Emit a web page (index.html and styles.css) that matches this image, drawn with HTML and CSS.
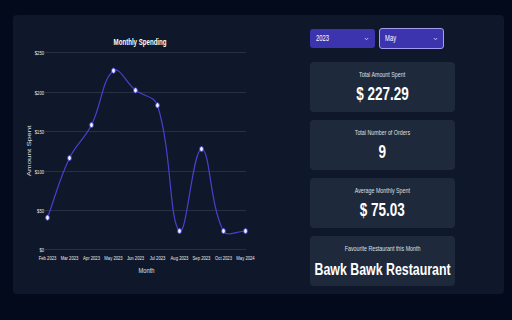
FILE: index.html
```html
<!DOCTYPE html>
<html lang="en">
<head>
<meta charset="utf-8">
<title>Monthly Spending</title>
<link rel="stylesheet" href="styles.css">
</head>
<body>
<main class="panel">
  <svg class="chart" width="287" height="279" viewBox="13 15 287 279" xmlns="http://www.w3.org/2000/svg">
    <text class="chart-title" x="140" y="45.5" text-anchor="middle">Monthly Spending</text>
    <g class="grid">
      <line x1="45" y1="52.5" x2="246" y2="52.5"/>
      <line x1="45" y1="92.5" x2="246" y2="92.5"/>
      <line x1="45" y1="131.5" x2="246" y2="131.5"/>
      <line x1="45" y1="171.5" x2="246" y2="171.5"/>
      <line x1="45" y1="210.5" x2="246" y2="210.5"/>
      <line x1="45" y1="249.5" x2="246" y2="249.5"/>
    </g>
    <g class="ytick" text-anchor="end">
      <text x="44" y="54.6">$250</text>
      <text x="44" y="94.6">$200</text>
      <text x="44" y="133.6">$150</text>
      <text x="44" y="173.6">$100</text>
      <text x="44" y="212.6">$50</text>
      <text x="44" y="251.6">$0</text>
    </g>
    <g class="xtick" text-anchor="middle">
      <text x="47.5" y="260">Feb 2023</text>
      <text x="69.5" y="260">Mar 2023</text>
      <text x="91.5" y="260">Apr 2023</text>
      <text x="113.5" y="260">May 2023</text>
      <text x="135.5" y="260">Jun 2023</text>
      <text x="157.5" y="260">Jul 2023</text>
      <text x="179.5" y="260">Aug 2023</text>
      <text x="201.5" y="260">Sep 2023</text>
      <text x="223.5" y="260">Oct 2023</text>
      <text x="245.5" y="260">May 2024</text>
    </g>
    <text class="axis-title" x="146.5" y="273.5" text-anchor="middle">Month</text>
    <g transform="translate(32 151) rotate(-90)">
      <text class="axis-title axis-title-v" x="0" y="0" text-anchor="middle">Amount Spent</text>
    </g>
    <path class="line" d="M47.5,217.7 C56.3,193.8 58.7,180.8 69.5,158 C76.3,143.7 84.4,139.1 91.5,125 C102,104.2 101.8,79.9 113.5,70.7 C119.4,66.1 126.3,83 135.5,90.3 C143.9,96.9 154.5,95.6 157.5,105.3 C172.1,151.9 168.9,220.5 179.5,231 C186.5,238 192.7,149 201.5,149 C210.3,149 209.5,204.9 223.5,231 C227.1,237.7 236.7,231 245.5,231"/>
    <g class="pts">
      <ellipse cx="47.5" cy="217.7" rx="1.9" ry="2.6"/>
      <ellipse cx="69.5" cy="158" rx="1.9" ry="2.6"/>
      <ellipse cx="91.5" cy="125" rx="1.9" ry="2.6"/>
      <ellipse cx="113.5" cy="70.7" rx="1.9" ry="2.6"/>
      <ellipse cx="135.5" cy="90.3" rx="1.9" ry="2.6"/>
      <ellipse cx="157.5" cy="105.3" rx="1.9" ry="2.6"/>
      <ellipse cx="179.5" cy="231" rx="1.9" ry="2.6"/>
      <ellipse cx="201.5" cy="149" rx="1.9" ry="2.6"/>
      <ellipse cx="223.5" cy="231" rx="1.9" ry="2.6"/>
      <ellipse cx="245.5" cy="231" rx="1.9" ry="2.6"/>
    </g>
  </svg>
  <section class="side">
    <div class="filters">
      <div class="select">
        <span class="select-text">2023</span>
        <svg class="chev" width="5" height="4" viewBox="0 0 5 4"><path d="M0.8 1 L2.5 2.8 L4.2 1"/></svg>
      </div>
      <div class="select select-active">
        <span class="select-text">May</span>
        <svg class="chev" width="5" height="4" viewBox="0 0 5 4"><path d="M0.8 1 L2.5 2.8 L4.2 1"/></svg>
      </div>
    </div>
    <div class="cards">
      <div class="card">
        <div class="label">Total Amount Spent</div>
        <div class="value">$ 227.29</div>
      </div>
      <div class="card">
        <div class="label">Total Number of Orders</div>
        <div class="value">9</div>
      </div>
      <div class="card">
        <div class="label">Average Monthly Spent</div>
        <div class="value">$ 75.03</div>
      </div>
      <div class="card">
        <div class="label">Favourite Restaurant this Month</div>
        <div class="value value-wide">Bawk Bawk Restaurant</div>
      </div>
    </div>
  </section>
</main>
</body>
</html>
```
FILE: styles.css
```css
* { box-sizing: border-box; }
html, body { margin: 0; padding: 0; }
body {
  background: #030a1b;
  font-family: "Liberation Sans", Arial, sans-serif;
  color: #fff;
  width: 512px;
  height: 320px;
  overflow: hidden;
}
.panel {
  margin: 15px 0 0 13px;
  width: 491px;
  height: 279px;
  background: #0f172a;
  border-radius: 4px;
  display: flex;
}

/* chart */
.chart { display: block; flex: none; }
.chart text {
  transform-box: fill-box;
  transform-origin: center;
  transform: scaleX(0.72);
}
.chart .ytick text { transform-origin: right center; }
.chart .axis-title-v { transform: scaleY(0.72); }
.chart-title { fill: #ffffff; font-size: 8.5px; font-weight: 700; }
.grid line { stroke: #263043; stroke-width: 1; }
.ytick text, .xtick text { fill: #eceef2; font-size: 5.8px; }
.axis-title { fill: #dfe2e8; font-size: 8px; }
.line { fill: none; stroke: #4840cf; stroke-width: 1.2; }
.pts ellipse { fill: #f2f3ff; stroke: #4840cf; stroke-width: 0.9; }

/* side column */
.side {
  margin-left: 10px;
  padding-top: 13px;
  width: 145px;
  display: flex;
  flex-direction: column;
}
.filters {
  display: flex;
  align-items: center;
  gap: 4px;
  height: 21px;
}
.select {
  width: 65px;
  height: 19px;
  background: #3c34ae;
  border-radius: 3px;
  display: flex;
  align-items: center;
  justify-content: space-between;
  padding: 0 6px;
  color: #fff;
}
.select-active {
  height: 21px;
  border: 1px solid #a49cf0;
  padding: 0 5px;
}
.select-text {
  display: inline-block;
  font-size: 8.2px;
  line-height: 10px;
  transform: scaleX(0.72);
  transform-origin: left center;
}
.chev { display: block; }
.chev path { fill: none; stroke: #cdcaf4; stroke-width: 0.9; }

.cards {
  margin-top: 13px;
  display: flex;
  flex-direction: column;
  gap: 8px;
}
.card {
  height: 50px;
  background: #1e293b;
  border-radius: 4px;
  display: flex;
  flex-direction: column;
  align-items: center;
  padding-top: 8px;
}
.label {
  font-size: 7.4px;
  line-height: 10px;
  color: #dde0e7;
  white-space: nowrap;
  transform: scaleX(0.72);
}
.value {
  margin-top: 3px;
  font-size: 18.8px;
  line-height: 22px;
  font-weight: 700;
  color: #fff;
  white-space: nowrap;
  transform: scaleX(0.72);
}
.value-wide { font-size: 17.2px; margin-top: 4px; }
```
